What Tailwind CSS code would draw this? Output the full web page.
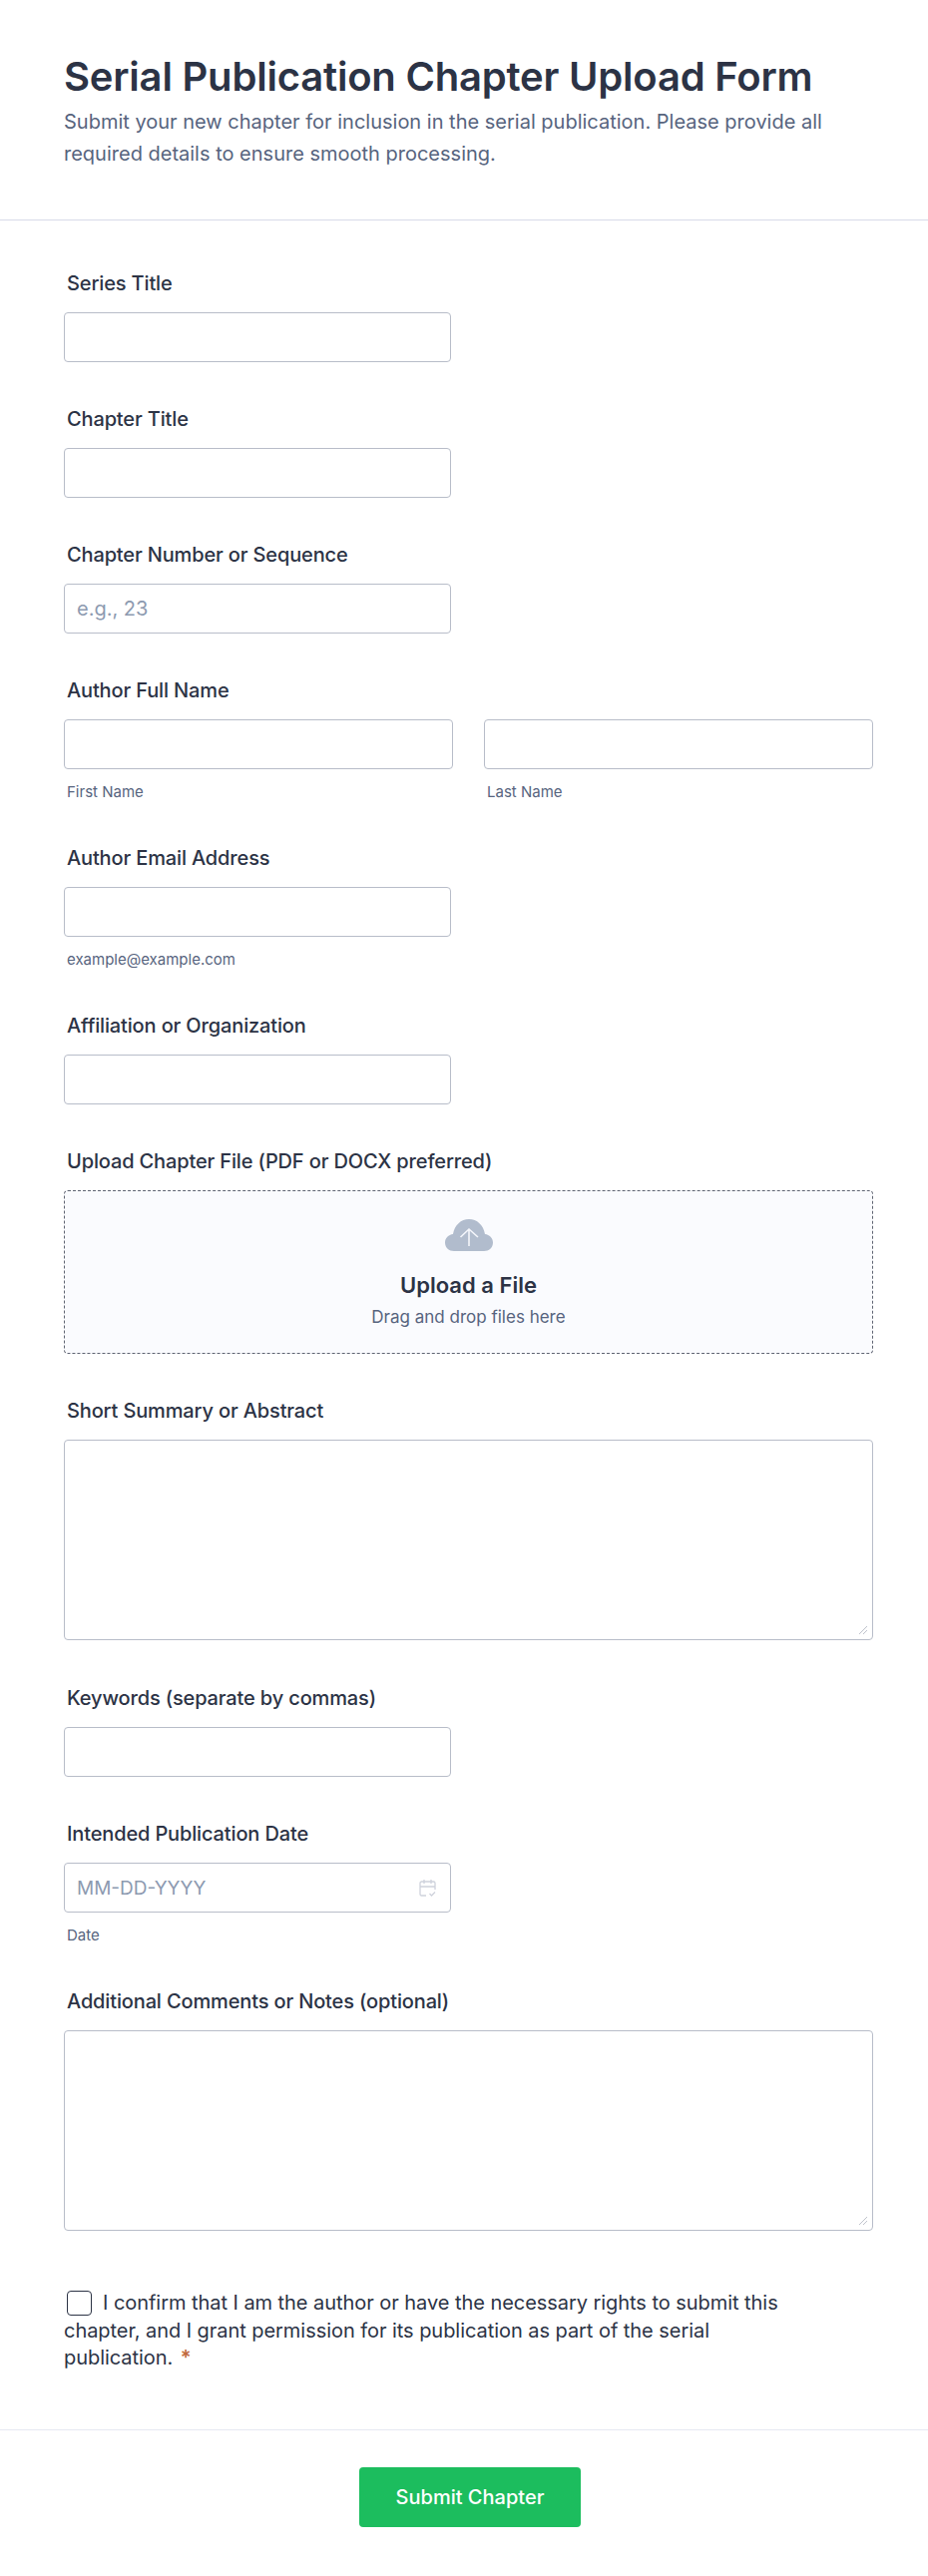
<!DOCTYPE html>
<html lang="en">
<head>
  <meta charset="UTF-8" />
  <title>Serial Publication Chapter Upload Form</title>
  <script src="https://cdn.jsdelivr.net/npm/@tailwindcss/browser@4"></script>
</head>
<body class="bg-white font-['Inter',sans-serif] text-[#2c3345] w-[930px] h-[2582px] overflow-hidden">
  <header class="h-[221px] px-16 pt-[53px] border-b border-[#d8dae9]">
    <h1 class="text-[40px] leading-[48px] font-semibold tracking-[-0.2px]">Serial Publication Chapter Upload Form</h1>
    <p class="mt-[5px] text-[20px] leading-[32px] text-[#57647e] w-[790px]">Submit your new chapter for inclusion in the serial publication. Please provide all required details to ensure smooth processing.</p>
  </header>

  <form class="pl-16 pr-[55px]">
    <div class="pt-[50px]">
      <label class="block pl-[3px] text-[20px] leading-[26px] font-medium tracking-[-0.14px]">Series Title</label>
      <input type="text" class="block mt-[16px] w-[388px] h-[50px] px-3 text-[20px] bg-white border border-[#b8bdc9] rounded-[4px]" />
    </div>
    <div class="pt-[44px]">
      <label class="block pl-[3px] text-[20px] leading-[26px] font-medium tracking-[-0.14px]">Chapter Title</label>
      <input type="text" class="block mt-[16px] w-[388px] h-[50px] px-3 text-[20px] bg-white border border-[#b8bdc9] rounded-[4px]" />
    </div>
    <div class="pt-[44px]">
      <label class="block pl-[3px] text-[20px] leading-[26px] font-medium tracking-[-0.14px]">Chapter Number or Sequence</label>
      <input type="text" placeholder="e.g., 23" class="block mt-[16px] w-[388px] h-[50px] px-3 text-[20px] bg-white border border-[#b8bdc9] rounded-[4px] placeholder:text-[#8d9ab0]" />
    </div>
    <div class="pt-[44px]">
      <label class="block pl-[3px] text-[20px] leading-[26px] font-medium tracking-[-0.14px]">Author Full Name</label>
      <div class="flex gap-[31px] mt-[16px]">
        <div class="w-[390px]">
          <input type="text" class="block w-full h-[50px] px-3 text-[20px] bg-white border border-[#b8bdc9] rounded-[4px]" />
          <p class="mt-[14px] pl-[3px] text-[15px] leading-[18px] text-[#57647e]">First Name</p>
        </div>
        <div class="w-[390px]">
          <input type="text" class="block w-full h-[50px] px-3 text-[20px] bg-white border border-[#b8bdc9] rounded-[4px]" />
          <p class="mt-[14px] pl-[3px] text-[15px] leading-[18px] text-[#57647e]">Last Name</p>
        </div>
      </div>
    </div>
    <div class="pt-[44px]">
      <label class="block pl-[3px] text-[20px] leading-[26px] font-medium tracking-[-0.14px]">Author Email Address</label>
      <input type="email" class="block mt-[16px] w-[388px] h-[50px] px-3 text-[20px] bg-white border border-[#b8bdc9] rounded-[4px]" />
      <p class="mt-[14px] pl-[3px] text-[15px] leading-[18px] text-[#57647e]">example@example.com</p>
    </div>
    <div class="pt-[44px]">
      <label class="block pl-[3px] text-[20px] leading-[26px] font-medium tracking-[-0.14px]">Affiliation or Organization</label>
      <input type="text" class="block mt-[16px] w-[388px] h-[50px] px-3 text-[20px] bg-white border border-[#b8bdc9] rounded-[4px]" />
    </div>
    <div class="pt-[44px]">
      <label class="block pl-[3px] text-[20px] leading-[26px] font-medium tracking-[-0.14px]">Upload Chapter File (PDF or DOCX preferred)</label>
      <div class="mt-[16px] h-[164px] flex flex-col items-center pt-[28px] bg-[#fafbfe] border border-dashed border-[#5f6472] rounded-[4px]">
        <svg class="w-[48px] h-[32px]" viewBox="0 0 48 32">
          <path d="M9 32C4 32 0 28.500 0 23.500C0 19 3.500 15.500 8 15C9.500 6 16 0 24 0C32 0 38.500 6 40 15C44.500 15.500 48 19 48 23.500C48 28.500 44 32 39 32Z" fill="#b1bccd" />
          <path d="M24 27V10.500M15.500 18L24 10L33 18" fill="none" stroke="#f4f6fb" stroke-width="1.600" />
        </svg>
        <p class="mt-[19px] text-[22px] leading-[30px] font-semibold">Upload a File</p>
        <p class="mt-[5px] text-[17px] leading-[24px] text-[#57647e]">Drag and drop files here</p>
      </div>
    </div>
    <div class="pt-[44px]">
      <label class="block pl-[3px] text-[20px] leading-[26px] font-medium tracking-[-0.14px]">Short Summary or Abstract</label>
      <div class="relative mt-[16px]">
        <textarea class="block w-full h-[201px] px-3 text-[20px] bg-white border border-[#b8bdc9] rounded-[4px] resize-none"></textarea>
        <svg class="absolute right-[6px] bottom-[6px] w-[8px] h-[8px]" viewBox="0 0 8 8" fill="none" stroke="#bfc3cc"><path d="M0 8L8 0M4 8L8 4" /></svg>
      </div>
    </div>
    <div class="pt-[45px]">
      <label class="block pl-[3px] text-[20px] leading-[26px] font-medium tracking-[-0.14px]">Keywords (separate by commas)</label>
      <input type="text" class="block mt-[16px] w-[388px] h-[50px] px-3 text-[20px] bg-white border border-[#b8bdc9] rounded-[4px]" />
    </div>
    <div class="pt-[44px]">
      <label class="block pl-[3px] text-[20px] leading-[26px] font-medium tracking-[-0.14px]">Intended Publication Date</label>
      <div class="relative mt-[16px] w-[388px]">
        <input type="text" placeholder="MM-DD-YYYY" class="block w-full h-[50px] px-3 text-[19px] bg-white border border-[#b8bdc9] rounded-[4px] placeholder:text-[#8d9ab0]" />
        <svg class="absolute right-[15px] top-[16px] w-[17px] h-[18px]" viewBox="0 0 17 18" fill="none" stroke="#ced2dc" stroke-width="1.300">
          <path d="M7 17H2.500C1.500 17 1 16.300 1 15.500V4.500C1 3.500 1.500 3 2.500 3H14.500C15.500 3 16 3.500 16 4.500V11M1 8H16M5 1V5M12 1V5M10.500 15L12.500 17L16 13.500" />
        </svg>
      </div>
      <p class="mt-[14px] pl-[3px] text-[15px] leading-[18px] text-[#57647e]">Date</p>
    </div>
    <div class="pt-[44px]">
      <label class="block pl-[3px] text-[20px] leading-[26px] font-medium tracking-[-0.14px]">Additional Comments or Notes (optional)</label>
      <div class="relative mt-[16px]">
        <textarea class="block w-full h-[201px] px-3 text-[20px] bg-white border border-[#b8bdc9] rounded-[4px] resize-none"></textarea>
        <svg class="absolute right-[6px] bottom-[6px] w-[8px] h-[8px]" viewBox="0 0 8 8" fill="none" stroke="#bfc3cc"><path d="M0 8L8 0M4 8L8 4" /></svg>
      </div>
    </div>
    <div class="pt-[59px] w-[745px] text-[20px] leading-[27.5px] tracking-[-0.05px]">
      <input type="checkbox" class="appearance-none inline-block align-middle w-[25px] h-[25px] ml-[3px] mr-[11px] -mt-[2px] border-[1.5px] border-[#2c3345] rounded-[4px] bg-white" /><span>I confirm that I am the author or have the necessary rights to submit this chapter, and I grant permission for its publication as part of the serial publication.</span>
      <span class="ml-[2px] text-[#c0683c] font-semibold">*</span>
    </div>
  </form>

  <footer class="mt-[57px] pt-[37px] pl-[12px] border-t border-[#e6e9f2] flex justify-center">
    <button type="button" class="w-[222px] h-[60px] bg-[#1cbd5e] text-white text-[20px] font-medium rounded-[4px]">Submit Chapter</button>
  </footer>
</body>
</html>
